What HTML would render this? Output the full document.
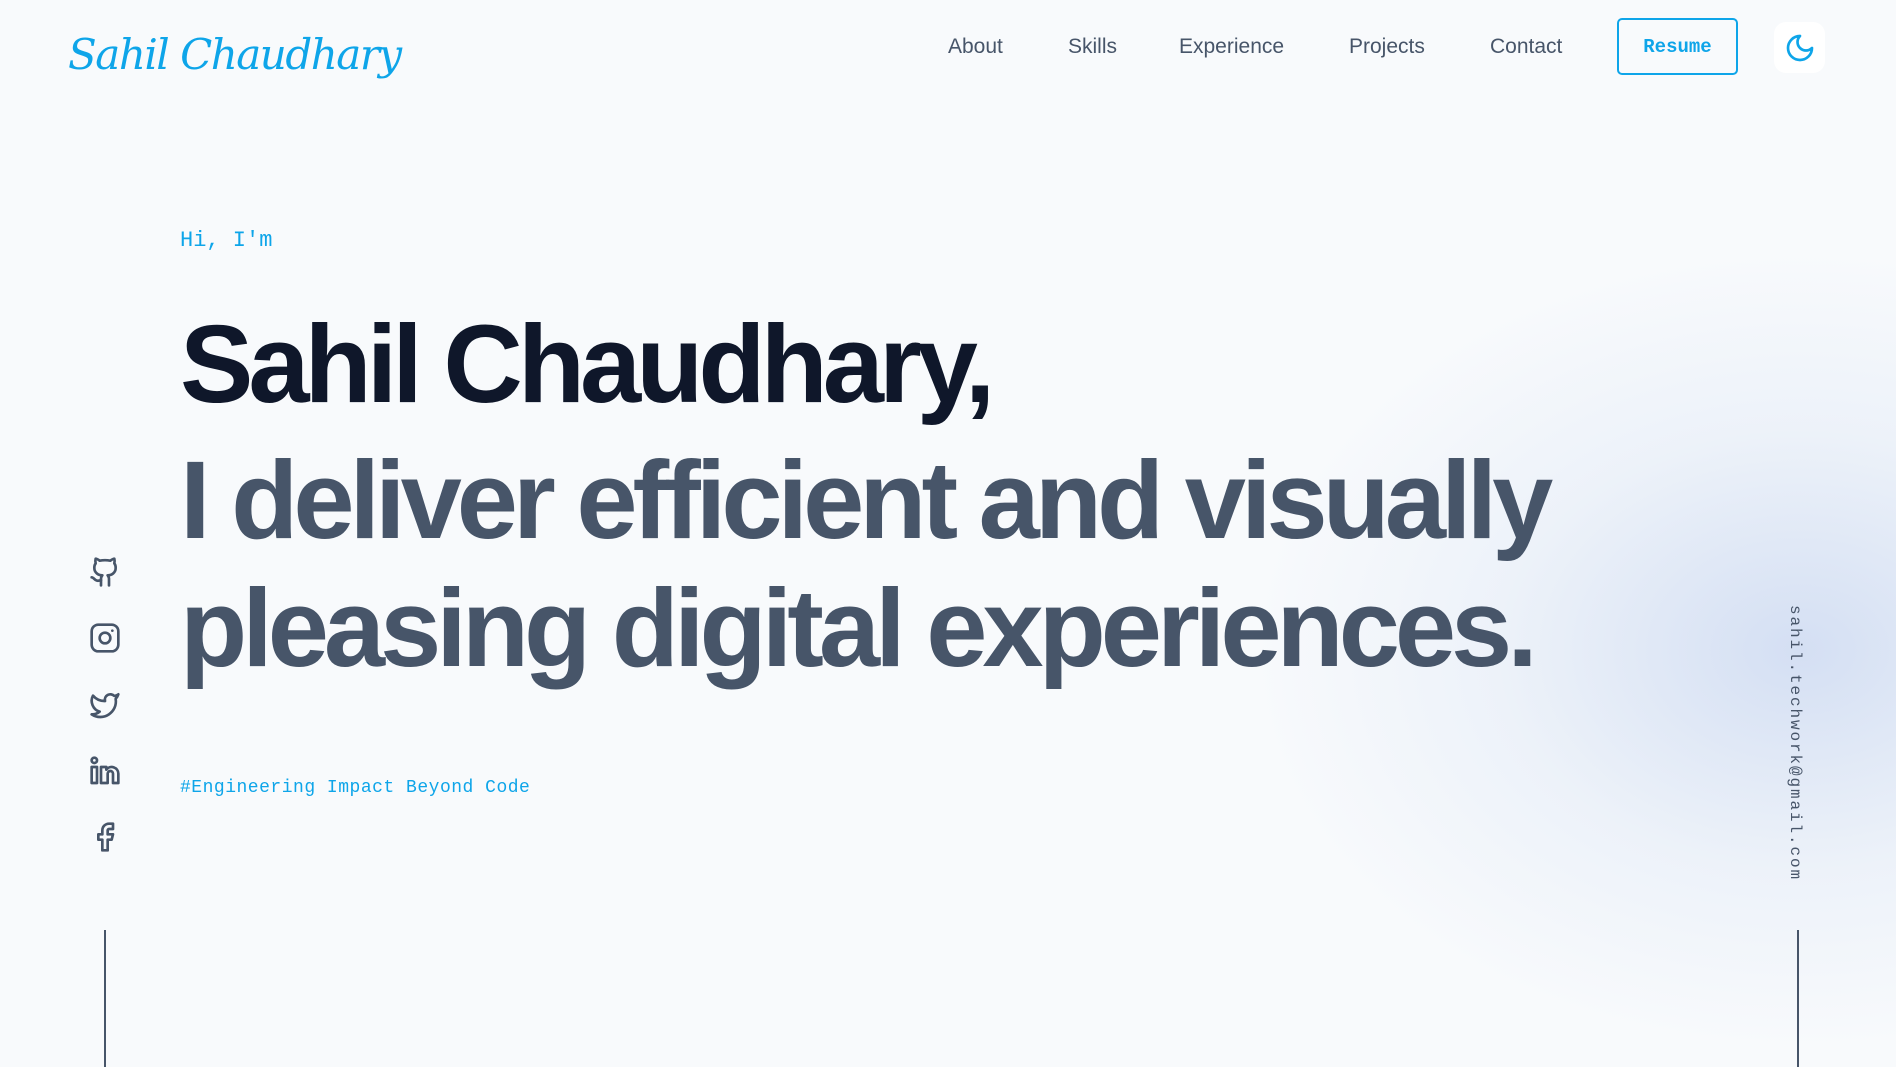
<!DOCTYPE html>
<html><head><meta charset="utf-8"><style>
*{margin:0;padding:0;box-sizing:border-box}
html,body{width:1896px;height:1067px;overflow:hidden}
body{background:#f8fafc;font-family:"Liberation Sans",sans-serif;position:relative}
.gw{position:absolute;left:0;top:0;width:1896px;height:1067px;overflow:hidden}
.glow{position:absolute;left:1250px;top:250px;width:1100px;height:800px;border-radius:50%;background:radial-gradient(closest-side,rgba(200,214,240,.75),rgba(220,230,245,.4) 55%,rgba(248,250,252,0) 100%)}
.logo{position:absolute;left:68px;top:30px;font-family:"DejaVu Serif","Liberation Serif",serif;font-style:italic;font-size:42px;color:#0ea5e9;letter-spacing:-1.5px;font-weight:200;-webkit-text-stroke:0}
.nav a{position:absolute;top:35px;font-size:21px;color:#475569;text-decoration:none}
.resume{position:absolute;left:1617px;top:18px;width:121px;height:57px;border:2px solid #0ea5e9;border-radius:5px;color:#0ea5e9;font-family:"Liberation Mono",monospace;font-size:19px;font-weight:bold;display:flex;align-items:center;justify-content:center}
.moon{position:absolute;left:1774px;top:22px;width:51px;height:51px;background:#fff;border-radius:12px;display:flex;align-items:center;justify-content:center}
.mono{font-family:"Liberation Mono","DejaVu Sans Mono",monospace;color:#0ea5e9}
.hi{position:absolute;left:180px;top:228px;font-size:22px}
.h1{position:absolute;left:180px;font-weight:bold;font-size:110px;letter-spacing:-5px;white-space:nowrap;line-height:1}
.tag{position:absolute;left:180px;top:778px;font-size:18px;letter-spacing:0.5px}
.icons svg{position:absolute;left:89px}
.vline{position:absolute;width:2px;background:#475569;top:930px;height:137px}
.email{position:absolute;left:1786px;top:605px;writing-mode:vertical-rl;font-family:"Liberation Mono",monospace;font-size:16px;letter-spacing:1.9px;color:#475569}
</style></head><body>
<div class="gw"><div class="glow"></div></div>
<div class="logo">Sahil Chaudhary</div>
<div class="nav">
<a style="left:948px">About</a><a style="left:1068px">Skills</a><a style="left:1179px">Experience</a><a style="left:1349px">Projects</a><a style="left:1490px">Contact</a>
</div>
<div class="resume">Resume</div>
<div class="moon"><svg width="32" height="32" viewBox="0 0 24 24" fill="none" stroke="#0ea5e9" stroke-width="2" stroke-linecap="round" stroke-linejoin="round"><path d="M12 3a6 6 0 0 0 9 9 9 9 0 1 1-9-9Z"/></svg></div>

<div class="hi mono">Hi, I'm</div>
<div class="h1" style="top:310px;color:#0f172a">Sahil Chaudhary,</div>
<div class="h1" style="top:446px;color:#475569">I deliver efficient and visually</div>
<div class="h1" style="top:574px;color:#475569">pleasing digital experiences.</div>
<div class="tag mono">#Engineering Impact Beyond Code</div>

<div class="icons">
<svg style="top:556px" width="32" height="32" viewBox="0 0 24 24" fill="none" stroke="#475569" stroke-width="2" stroke-linecap="round" stroke-linejoin="round"><path d="M15 22v-4a4.8 4.8 0 0 0-1-3.5c3 0 6-2 6-5.5.08-1.25-.27-2.48-1-3.5.28-1.15.28-2.35 0-3.5 0 0-1 0-3 1.5-2.640-.5-5.36-.5-8 0C6 2 5 2 5 2c-.3 1.15-.3 2.35 0 3.5A5.4 5.4 0 0 0 4 9c0 3.5 3 5.5 6 5.5-.39.49-.68 1.050-.85 1.65-.17.6-.22 1.23-.15 1.85v4"/><path d="M9 18c-4.51 2-5-2-7-2"/></svg>
<svg style="top:622px" width="32" height="32" viewBox="0 0 24 24" fill="none" stroke="#475569" stroke-width="2" stroke-linecap="round" stroke-linejoin="round"><rect x="2" y="2" width="20" height="20" rx="5"/><circle cx="12" cy="12" r="4"/><line x1="17.5" y1="6.5" x2="17.51" y2="6.5"/></svg>
<svg style="top:689px" width="32" height="32" viewBox="0 0 24 24" fill="none" stroke="#475569" stroke-width="2" stroke-linecap="round" stroke-linejoin="round"><path d="M22 4s-.7 2.1-2 3.4c1.6 10-9.4 17.3-18 11.6 2.2.1 4.4-.6 6-2C3 15.5.5 9.6 3 5c2.2 2.6 5.6 4.1 9 4-.9-4.2 4-6.6 7-3.8 1.1 0 3-1.2 3-1.2z"/></svg>
<svg style="top:755px" width="32" height="32" viewBox="0 0 24 24" fill="none" stroke="#475569" stroke-width="2" stroke-linecap="round" stroke-linejoin="round"><rect x="2" y="9" width="4" height="12"/><circle cx="4" cy="4" r="2"/><path d="M9 21V9h4v2a5 5 0 0 1 9 3v7h-4v-7a2 2 0 0 0-4 0v7z"/></svg>
<svg style="top:821px" width="32" height="32" viewBox="0 0 24 24" fill="none" stroke="#475569" stroke-width="2" stroke-linecap="round" stroke-linejoin="round"><path d="M18 2h-3a5 5 0 0 0-5 5v3H7v4h3v8h4v-8h3l1-4h-4V7a1 1 0 0 1 1-1h3z"/></svg>
</div>
<div class="vline" style="left:104px"></div>
<div class="email">sahil.techwork@gmail.com</div>
<div class="vline" style="left:1797px"></div>
</body></html>
